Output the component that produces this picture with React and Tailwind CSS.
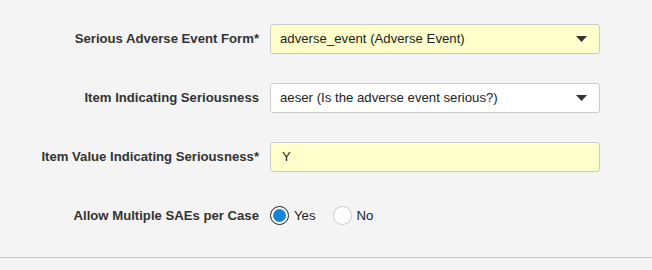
export default function App() {
  const font = { fontFamily: '"Liberation Sans", Arial, sans-serif' };
  const Caret = () => (
    <svg width="11" height="6" viewBox="0 0 11 6" className="absolute right-[12px] top-1/2 -translate-y-1/2">
      <path d="M0 0 L11 0 L5.5 6 Z" fill="#333" />
    </svg>
  );
  return (
    <div className="w-[652px] h-[270px] bg-[#f4f4f4] text-[#333] overflow-hidden" style={font}>
      <div className="flex flex-col gap-[29px] pt-[24px]">
        <div className="flex items-center h-[30px]">
          <div className="w-[260px] pr-[1px] text-right font-bold text-[13.15px]">Serious Adverse Event Form*</div>
          <div className="ml-[10px] relative w-[330px] h-[30px] rounded-[3px] border border-[#ccc] bg-[#ffffcc] flex items-center pl-[9px] text-[13.2px] text-[#222]">
            adverse_event (Adverse Event)
            <Caret />
          </div>
        </div>
        <div className="flex items-center h-[30px]">
          <div className="w-[260px] pr-[1px] text-right font-bold text-[13.15px]">Item Indicating Seriousness</div>
          <div className="ml-[10px] relative w-[330px] h-[30px] rounded-[3px] border border-[#ccc] bg-white flex items-center pl-[9px] text-[13.2px] text-[#222]">
            aeser (Is the adverse event serious?)
            <Caret />
          </div>
        </div>
        <div className="flex items-center h-[30px]">
          <div className="w-[260px] pr-[1px] text-right font-bold text-[13.15px]">Item Value Indicating Seriousness*</div>
          <div className="ml-[10px] w-[330px] h-[30px] rounded-[3px] border border-[#ccc] bg-[#ffffcc] flex items-center pl-[11px] text-[13.2px] text-[#222]">
            Y
          </div>
        </div>
        <div className="flex items-center h-[30px]">
          <div className="w-[260px] pr-[1px] text-right font-bold text-[13.15px]">Allow Multiple SAEs per Case</div>
          <div className="ml-[10px] flex items-center text-[13.2px] text-[#222]">
            <span className="w-[19px] h-[19px] rounded-full border-[1.5px] border-[#222] bg-white flex items-center justify-center">
              <span className="w-[13px] h-[13px] rounded-full bg-[#1785d4]" />
            </span>
            <span className="ml-[5px]">Yes</span>
            <span className="ml-[17px] w-[19px] h-[19px] rounded-full border border-[#ccc] bg-white" />
            <span className="ml-[5px]">No</span>
          </div>
        </div>
      </div>
      <div className="mt-[26px] h-px bg-[#ccc]" />
    </div>
  );
}
